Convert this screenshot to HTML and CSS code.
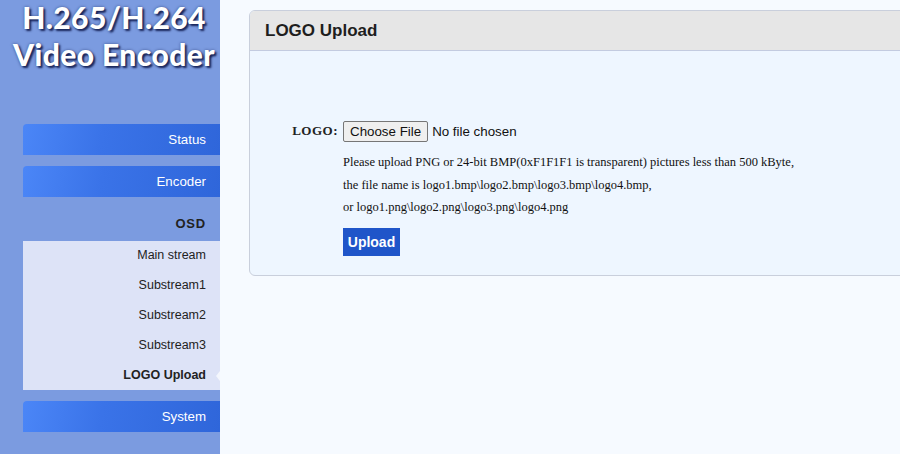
FILE: index.html
```html
<!DOCTYPE html>
<html>
<head>
<meta charset="utf-8">
<link rel="stylesheet" href="styles.css">
</head>
<body>
<div class="page">
  <aside class="sidebar">
    <div class="brand">H.265/H.264<br>Video Encoder</div>
    <nav class="menu">
      <a class="menu-btn">Status</a>
      <a class="menu-btn">Encoder</a>
      <div class="menu-group">OSD</div>
      <div class="submenu">
        <a class="sub-item">Main stream</a>
        <a class="sub-item">Substream1</a>
        <a class="sub-item">Substream2</a>
        <a class="sub-item">Substream3</a>
        <a class="sub-item active">LOGO Upload</a>
      </div>
      <a class="menu-btn">System</a>
    </nav>
  </aside>
  <main class="main">
    <section class="panel">
      <header class="panel-head">LOGO Upload</header>
      <div class="panel-body">
        <div class="form-row">
          <label class="form-label">LOGO:</label>
          <div class="form-field">
            <div class="file-input"><span class="file-btn">Choose File</span><span class="file-name">No file chosen</span></div>
            <p class="hint">Please upload PNG or 24-bit BMP(0xF1F1F1 is transparent) pictures less than 500 kByte,</p>
            <p class="hint">the file name is logo1.bmp\logo2.bmp\logo3.bmp\logo4.bmp,</p>
            <p class="hint">or logo1.png\logo2.png\logo3.png\logo4.png</p>
            <button class="upload-btn">Upload</button>
          </div>
        </div>
      </div>
    </section>
  </main>
</div>
</body>
</html>
```
FILE: styles.css
```css
html, body {
  margin: 0;
  padding: 0;
  height: 100%;
  overflow: hidden;
}
body {
  background: #f6faff;
  font-family: "Liberation Sans", Arial, sans-serif;
}
.page {
  display: flex;
  height: 454px;
}
.sidebar {
  width: 220px;
  flex: none;
  background: #7b9be0;
  display: flex;
  flex-direction: column;
}
.brand {
  font-family: Lato, "Open Sans", sans-serif;
  font-weight: 900;
  font-size: 30px;
  line-height: 37px;
  letter-spacing: 0.4px;
  color: #fff;
  text-align: center;
  padding: 0 0 0 8px;
  margin-top: -1px;
  text-shadow: 2px 2px 2px rgba(10, 20, 70, 0.85), 0 0 3px rgba(10, 20, 70, 0.5);
  white-space: nowrap;
}
.menu {
  margin-top: 51px;
  padding-left: 23px;
  display: flex;
  flex-direction: column;
}
.menu-btn {
  display: block;
  height: 31px;
  line-height: 31px;
  text-align: right;
  padding-right: 14px;
  color: #fff;
  font-size: 13.3px;
  background: linear-gradient(100deg, #4b86f7 0%, #3a73e8 40%, #2f66da 100%);
  border-top-left-radius: 4px;
  margin-bottom: 11px;
}
.menu-group {
  height: 30px;
  line-height: 30px;
  margin-top: 1px;
  text-align: right;
  padding-right: 14px;
  font-size: 13px;
  font-weight: bold;
  letter-spacing: 0.8px;
  color: #222;
}
.submenu {
  margin-top: 2px;
  background: #dde3f7;
  display: flex;
  flex-direction: column;
  margin-bottom: 11px;
}
.sub-item {
  position: relative;
  display: block;
  height: 30px;
  line-height: 31px;
  text-align: right;
  padding-right: 14px;
  font-size: 12.5px;
  color: #222;
}
.sub-item:first-child {
  height: 29px;
  line-height: 28px;
}
.sub-item.active {
  font-weight: bold;
}
.sub-item.active::after {
  content: "";
  position: absolute;
  right: 0;
  top: 11px;
  border-style: solid;
  border-width: 5px 4px 5px 0;
  border-color: transparent #f4f7fd transparent transparent;
}
.main {
  flex: 1;
  padding: 10px 0 0 29px;
  min-width: 0;
}
.panel {
  width: 680px;
  border: 1px solid #c9cfdc;
  border-radius: 6px;
  background: #eef6ff;
  overflow: hidden;
}
.panel-head {
  height: 39px;
  line-height: 39px;
  background: #e6e6e6;
  border-bottom: 1px solid #c3cbe0;
  padding-left: 15px;
  font-size: 17px;
  font-weight: bold;
  color: #1e1e1e;
}
.panel-body {
  height: 224px;
  padding-top: 69px;
  box-sizing: border-box;
}
.form-row {
  display: flex;
  align-items: flex-start;
}
.form-label {
  width: 88px;
  text-align: right;
  padding-right: 5px;
  font-family: "Liberation Serif", "Times New Roman", serif;
  font-weight: bold;
  font-size: 13px;
  line-height: 22px;
  color: #222;
  letter-spacing: 0.5px;
}
.form-field {
  display: flex;
  flex-direction: column;
  align-items: flex-start;
}
.file-input {
  display: flex;
  align-items: center;
  height: 22px;
  font-size: 13.333px;
  color: #111;
}
.file-btn {
  display: inline-block;
  height: 19px;
  line-height: 19px;
  padding: 0 6px;
  border: 1px solid #767676;
  border-radius: 2px;
  background: #efefef;
  margin-right: 4px;
}
.hint {
  margin: 0;
  font-family: "Liberation Serif", "Times New Roman", serif;
  font-size: 12.5px;
  line-height: 22.5px;
  color: #111;
}
.hint:first-of-type {
  margin-top: 9px;
}
.upload-btn {
  margin-top: 9px;
  height: 28px;
  width: 57px;
  border: none;
  background: #1f55c9;
  color: #fff;
  font-family: "Liberation Sans", Arial, sans-serif;
  font-weight: bold;
  font-size: 14px;
  padding: 0;
}
```
